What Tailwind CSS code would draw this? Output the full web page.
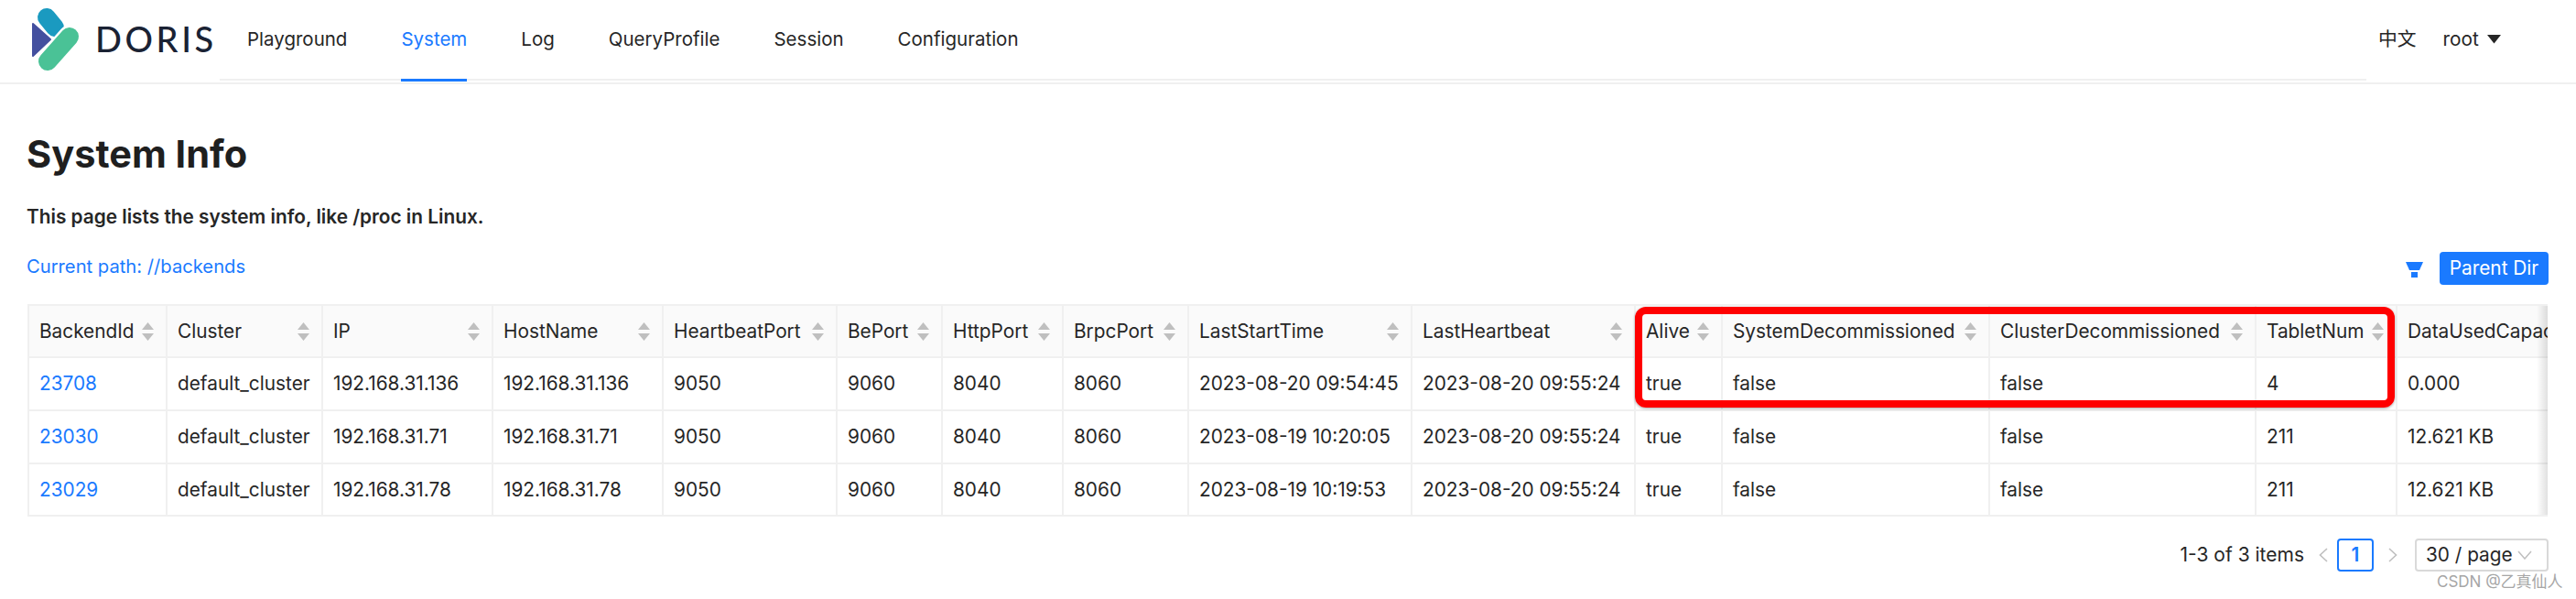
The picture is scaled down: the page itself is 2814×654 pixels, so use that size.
<!DOCTYPE html>
<html lang="en">
<head>
  <meta charset="UTF-8" />
  <title>Doris System Info</title>
  <script src="https://cdn.jsdelivr.net/npm/@tailwindcss/browser@4"></script>
</head>
<body class="bg-white h-[654px] overflow-hidden relative font-['Inter','Noto_Sans_CJK_SC',sans-serif] text-[#262626] text-[20.8px]">

  <!-- Header -->
  <header class="h-[92px] border-b-2 border-[#f0f0f0] flex pl-[20px] relative">
    <svg class="w-[220px] h-[90px] shrink-0" viewBox="0 0 220 90">
      <path d="M31 19L40 30" stroke="#1a9ac0" stroke-width="20" stroke-linecap="round"/>
      <path d="M56 40L32 67" stroke="#ffffff" stroke-width="25" stroke-linecap="round"/>
      <path d="M56 40L32 67" stroke="#4ac296" stroke-width="20" stroke-linecap="round"/>
      <path d="M16 26L35 43L16 61Z" fill="#44509f" stroke="#44509f" stroke-width="2" stroke-linejoin="round"/>
    </svg>
    <span class="absolute left-[104px] top-[19px] text-[38px] leading-[46px] tracking-[3.6px] font-['Lato',sans-serif] font-medium text-[#1a2233]">DORIS</span>
    <nav class="flex-1 h-[88px] border-b-2 border-[#f0f0f0] flex items-start pt-[28px] gap-[59px] pl-[30px] text-[20.5px]">
      <a class="leading-[30px]">Playground</a>
      <a class="leading-[30px] text-[#1a7aff] relative">System<span class="absolute left-0 right-0 top-[58px] h-[3px] bg-[#1a7aff]"></span></a>
      <a class="leading-[30px]">Log</a>
      <a class="leading-[30px]">QueryProfile</a>
      <a class="leading-[30px]">Session</a>
      <a class="leading-[30px]">Configuration</a>
    </nav>
    <div class="w-[229px] shrink-0 flex items-start pt-[28px] pl-[13px]">
      <span class="leading-[30px]">中文</span>
      <span class="leading-[30px] ml-[29px]">root</span>
      <svg class="ml-[9px] mt-[10px]" width="15" height="10" viewBox="0 0 15 10"><path d="M0 0H15L7.5 9.5Z" fill="#262626"/></svg>
    </div>
  </header>

  <main class="px-[30px]">
    <h1 class="mt-[50px] text-[41.5px] leading-[52px] font-bold text-[#1f1f1f] -ml-[1px]">System Info</h1>
    <p class="mt-[28px] text-[20.8px] leading-[30px] font-semibold -ml-[1px]">This page lists the system info, like /proc in Linux.</p>

    <div class="mt-[24px] h-[36px] flex items-start justify-between">
      <span class="text-[#1a7aff] leading-[30px] text-[20.2px] -ml-[1px]">Current path: //backends</span>
      <div class="flex items-start gap-[18px] -mt-[1px]">
        <svg class="mt-[11px]" width="19" height="17" viewBox="0 0 19 17"><path d="M0 0H19L15 9H4Z" fill="#1a7aff"/><rect x="6" y="11" width="7" height="6" fill="#1a7aff"/></svg>
        <button class="w-[119px] h-[36px] bg-[#1a7aff] rounded-[4px] text-white text-[20.8px] leading-[36px]">Parent Dir</button>
      </div>
    </div>

    <!-- Table -->
    <div class="mt-[20px] relative w-[2753px] h-[232px] overflow-hidden border-t-2 border-b-2 border-l-2 border-[#f0f0f0]">
      <table class="table-fixed border-collapse w-[2900px] text-left [&_td]:h-[58px] [&_td]:pl-[11px] [&_td]:pr-[12px] [&_td]:border-r-2 [&_td]:border-b-2 [&_td]:border-[#f0f0f0] [&_td]:whitespace-nowrap [&_th]:h-[56px] [&_th]:pl-[11px] [&_th]:pr-[13px] [&_th]:font-normal [&_th]:bg-[#fafafa] [&_th]:border-r-2 [&_th]:border-b-2 [&_th]:border-[#f0f0f0] [&_th]:whitespace-nowrap">
        <colgroup>
          <col class="w-[150px]"><col class="w-[170px]"><col class="w-[186px]"><col class="w-[186px]"><col class="w-[190px]"><col class="w-[115px]"><col class="w-[132px]"><col class="w-[137px]"><col class="w-[244px]"><col class="w-[244px]"><col class="w-[95px]"><col class="w-[292px]"><col class="w-[291px]"><col class="w-[154px]"><col class="w-[320px]">
        </colgroup>
        <thead>
          <tr>
            <th><div class="flex justify-between items-center">BackendId<svg width="13" height="20" viewBox="0 0 13 20"><path d="M6.5 0L13 8H0Z M0 12H13L6.5 20Z" fill="#bfbfbf"/></svg></div></th>
            <th><div class="flex justify-between items-center">Cluster<svg width="13" height="20" viewBox="0 0 13 20"><path d="M6.5 0L13 8H0Z M0 12H13L6.5 20Z" fill="#bfbfbf"/></svg></div></th>
            <th><div class="flex justify-between items-center">IP<svg width="13" height="20" viewBox="0 0 13 20"><path d="M6.5 0L13 8H0Z M0 12H13L6.5 20Z" fill="#bfbfbf"/></svg></div></th>
            <th><div class="flex justify-between items-center">HostName<svg width="13" height="20" viewBox="0 0 13 20"><path d="M6.5 0L13 8H0Z M0 12H13L6.5 20Z" fill="#bfbfbf"/></svg></div></th>
            <th><div class="flex justify-between items-center">HeartbeatPort<svg width="13" height="20" viewBox="0 0 13 20"><path d="M6.5 0L13 8H0Z M0 12H13L6.5 20Z" fill="#bfbfbf"/></svg></div></th>
            <th><div class="flex justify-between items-center">BePort<svg width="13" height="20" viewBox="0 0 13 20"><path d="M6.5 0L13 8H0Z M0 12H13L6.5 20Z" fill="#bfbfbf"/></svg></div></th>
            <th><div class="flex justify-between items-center">HttpPort<svg width="13" height="20" viewBox="0 0 13 20"><path d="M6.5 0L13 8H0Z M0 12H13L6.5 20Z" fill="#bfbfbf"/></svg></div></th>
            <th><div class="flex justify-between items-center">BrpcPort<svg width="13" height="20" viewBox="0 0 13 20"><path d="M6.5 0L13 8H0Z M0 12H13L6.5 20Z" fill="#bfbfbf"/></svg></div></th>
            <th><div class="flex justify-between items-center">LastStartTime<svg width="13" height="20" viewBox="0 0 13 20"><path d="M6.5 0L13 8H0Z M0 12H13L6.5 20Z" fill="#bfbfbf"/></svg></div></th>
            <th><div class="flex justify-between items-center">LastHeartbeat<svg width="13" height="20" viewBox="0 0 13 20"><path d="M6.5 0L13 8H0Z M0 12H13L6.5 20Z" fill="#bfbfbf"/></svg></div></th>
            <th><div class="flex justify-between items-center">Alive<svg width="13" height="20" viewBox="0 0 13 20"><path d="M6.5 0L13 8H0Z M0 12H13L6.5 20Z" fill="#bfbfbf"/></svg></div></th>
            <th><div class="flex justify-between items-center">SystemDecommissioned<svg width="13" height="20" viewBox="0 0 13 20"><path d="M6.5 0L13 8H0Z M0 12H13L6.5 20Z" fill="#bfbfbf"/></svg></div></th>
            <th><div class="flex justify-between items-center">ClusterDecommissioned<svg width="13" height="20" viewBox="0 0 13 20"><path d="M6.5 0L13 8H0Z M0 12H13L6.5 20Z" fill="#bfbfbf"/></svg></div></th>
            <th><div class="flex justify-between items-center">TabletNum<svg width="13" height="20" viewBox="0 0 13 20"><path d="M6.5 0L13 8H0Z M0 12H13L6.5 20Z" fill="#bfbfbf"/></svg></div></th>
            <th><div class="flex justify-between items-center">DataUsedCapacity<svg width="13" height="20" viewBox="0 0 13 20"><path d="M6.5 0L13 8H0Z M0 12H13L6.5 20Z" fill="#bfbfbf"/></svg></div></th>
          </tr>
        </thead>
        <tbody>
          <tr><td class="text-[#1a7aff]">23708</td><td>default_cluster</td><td>192.168.31.136</td><td>192.168.31.136</td><td>9050</td><td>9060</td><td>8040</td><td>8060</td><td>2023-08-20 09:54:45</td><td>2023-08-20 09:55:24</td><td>true</td><td>false</td><td>false</td><td>4</td><td>0.000</td></tr>
          <tr><td class="text-[#1a7aff]">23030</td><td>default_cluster</td><td>192.168.31.71</td><td>192.168.31.71</td><td>9050</td><td>9060</td><td>8040</td><td>8060</td><td>2023-08-19 10:20:05</td><td>2023-08-20 09:55:24</td><td>true</td><td>false</td><td>false</td><td>211</td><td>12.621 KB</td></tr>
          <tr><td class="text-[#1a7aff]">23029</td><td>default_cluster</td><td>192.168.31.78</td><td>192.168.31.78</td><td>9050</td><td>9060</td><td>8040</td><td>8060</td><td>2023-08-19 10:19:53</td><td>2023-08-20 09:55:24</td><td>true</td><td>false</td><td>false</td><td>211</td><td>12.621 KB</td></tr>
        </tbody>
      </table>
      <!-- red annotation and scroll shadow lie over the table -->
      <div class="absolute left-[1754px] top-[1px] w-[830px] h-[110px] border-[8px] border-[#ff0000] rounded-[12px] shadow-[0_1px_3px_rgba(0,0,0,0.35)]"></div>
      <div class="absolute right-0 top-0 bottom-0 w-[12px] bg-gradient-to-r from-transparent to-[#0000001f]"></div>
    </div>

    <!-- Pagination -->
    <div class="mt-[24px] flex items-center justify-end h-[36px]">
      <span class="text-[21px]">1-3 of 3 items</span>
      <svg class="ml-[16px]" width="10" height="16" viewBox="0 0 10 16"><path d="M9 1L1.5 8L9 15" fill="none" stroke="#bfbfbf" stroke-width="1.6"/></svg>
      <span class="ml-[10px] w-[40px] h-[36px] border-2 border-[#1a7aff] rounded-[4px] text-[#1a7aff] font-semibold text-center leading-[32px]">1</span>
      <svg class="ml-[16px]" width="10" height="16" viewBox="0 0 10 16"><path d="M1 1L8.5 8L1 15" fill="none" stroke="#bfbfbf" stroke-width="1.6"/></svg>
      <div class="ml-[19px] w-[146px] h-[36px] border-2 border-[#d9d9d9] rounded-[4px] flex items-center justify-between pl-[10px] pr-[16px]">
        <span>30 / page</span>
        <svg width="16" height="10" viewBox="0 0 16 10"><path d="M1 1L8 9L15 1" fill="none" stroke="#bfbfbf" stroke-width="1.5"/></svg>
      </div>
    </div>
  </main>

  <span class="absolute left-[2662px] top-[624px] text-[17px] leading-[22px] text-[#a6a6a6]">CSDN @乙真仙人</span>
</body>
</html>
